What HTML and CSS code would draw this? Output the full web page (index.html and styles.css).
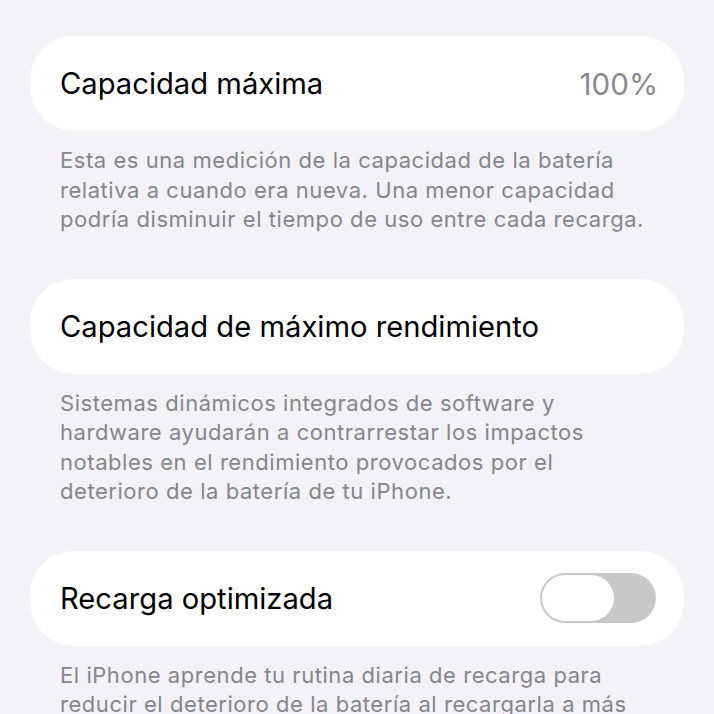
FILE: index.html
```html
<!DOCTYPE html>
<html lang="es">
<head>
<meta charset="utf-8">
<link rel="stylesheet" href="styles.css">
</head>
<body>
<main class="page">
  <section class="group">
    <div class="card">
      <span class="label">Capacidad máxima</span>
      <span class="value">100%</span>
    </div>
    <p class="note">Esta es una medición de la capacidad de la batería<br>relativa a cuando era nueva. Una menor capacidad<br>podría disminuir el tiempo de uso entre cada recarga.</p>
  </section>
  <section class="group">
    <div class="card">
      <span class="label">Capacidad de máximo rendimiento</span>
    </div>
    <p class="note">Sistemas dinámicos integrados de software y<br>hardware ayudarán a contrarrestar los impactos<br>notables en el rendimiento provocados por el<br>deterioro de la batería de tu iPhone.</p>
  </section>
  <section class="group">
    <div class="card">
      <span class="label">Recarga optimizada</span>
      <span class="toggle"><span class="thumb"></span></span>
    </div>
    <p class="note">El iPhone aprende tu rutina diaria de recarga para<br>reducir el deterioro de la batería al recargarla a más</p>
  </section>
</main>
</body>
</html>
```
FILE: styles.css
```css
* { box-sizing: border-box; }
html, body { margin: 0; padding: 0; }
body {
  background: #f2f2f7;
  font-family: Inter, "Liberation Sans", sans-serif;
  width: 714px;
  height: 714px;
  overflow: hidden;
}
.page {
  padding: 36px 30px 0 30px;
  display: flex;
  flex-direction: column;
  gap: 44px;
}
.group { display: flex; flex-direction: column; }
.card {
  background: #ffffff;
  border-radius: 44px;
  height: 95px;
  display: flex;
  align-items: center;
  justify-content: space-between;
  padding: 0 28px 0 30px;
}
.label {
  font-size: 29.2px;
  color: #000;
}
.value {
  font-size: 29.6px;
  color: #8a8a8e;
  margin-right: -2px;
}
.note {
  margin: 15px 0 0 0;
  padding: 0 30px;
  font-size: 22px;
  letter-spacing: 0.55px;
  line-height: 29.5px;
  color: #86868b;
  white-space: nowrap;
}
.toggle {
  width: 116px;
  height: 50px;
  border-radius: 25px;
  background: #c8c8c8;
  display: flex;
  align-items: center;
  padding: 2px;
}
.thumb {
  width: 72px;
  height: 46px;
  border-radius: 23px;
  background: #fff;
}
```
